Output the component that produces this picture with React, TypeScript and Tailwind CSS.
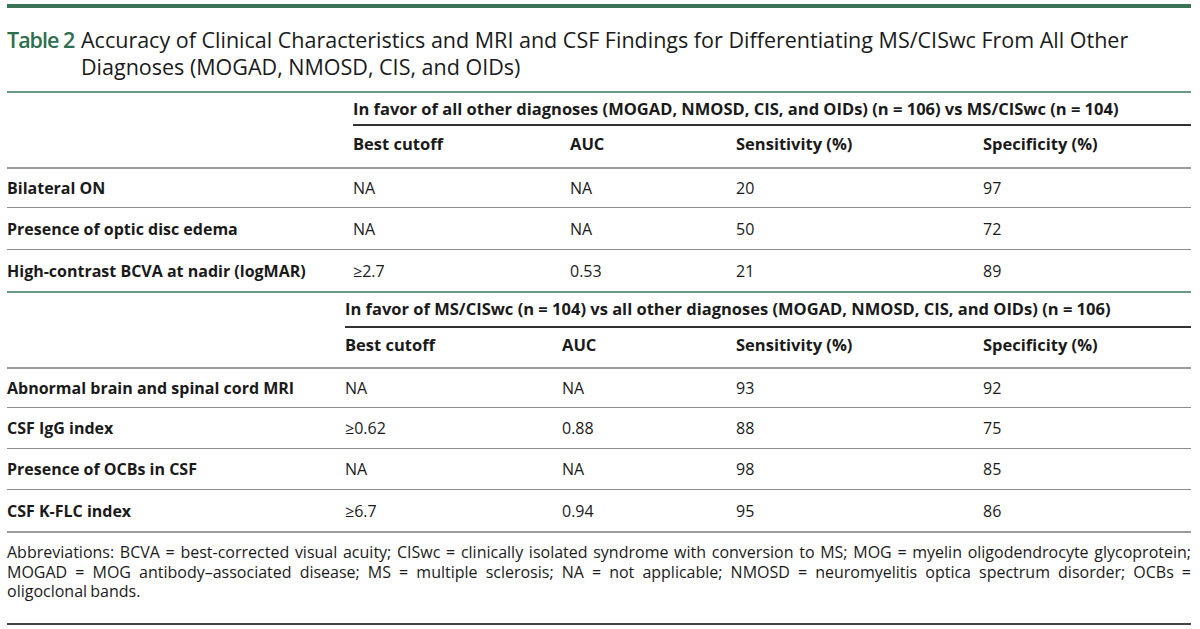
import React from 'react';

type Group = {
  title: string;
  cols: string[];
  widths: string[];
  rows: string[][];
};

const groups: Group[] = [
  {
    title: 'In favor of all other diagnoses (MOGAD, NMOSD, CIS, and OIDs) (n = 106) vs MS/CISwc (n = 104)',
    cols: ['Best cutoff', 'AUC', 'Sensitivity (%)', 'Specificity (%)'],
    widths: ['w-[346px]', 'w-[217px]', 'w-[166px]', 'w-[247px]'],
    rows: [
      ['Bilateral ON', 'NA', 'NA', '20', '97'],
      ['Presence of optic disc edema', 'NA', 'NA', '50', '72'],
      ['High-contrast BCVA at nadir (logMAR)', '≥2.7', '0.53', '21', '89'],
    ],
  },
  {
    title: 'In favor of MS/CISwc (n = 104) vs all other diagnoses (MOGAD, NMOSD, CIS, and OIDs) (n = 106)',
    cols: ['Best cutoff', 'AUC', 'Sensitivity (%)', 'Specificity (%)'],
    widths: ['w-[338px]', 'w-[217px]', 'w-[174px]', 'w-[247px]'],
    rows: [
      ['Abnormal brain and spinal cord MRI', 'NA', 'NA', '93', '92'],
      ['CSF IgG index', '≥0.62', '0.88', '88', '75'],
      ['Presence of OCBs in CSF', 'NA', 'NA', '98', '85'],
      ['CSF K-FLC index', '≥6.7', '0.94', '95', '86'],
    ],
  },
];

const Section = ({ group, first }: { group: Group; first: boolean }) => {
  const [wLabel, wCut, wAuc, wSens] = group.widths;
  return (
    <div className="flex flex-col">
      {/* group heading spanning the value columns */}
      <div className={`flex ${first ? 'h-[31px] pt-[2px]' : 'h-[33px]'} items-center`}>
        <div className={`${wLabel} shrink-0`} />
        <div className="flex-1 font-bold text-[16.5px]">{group.title}</div>
      </div>
      <div className="flex">
        <div className={`${wLabel} shrink-0`} />
        <div className="flex-1 h-[2px] bg-[#333]" />
      </div>
      <div className={`flex ${first ? 'h-[41px]' : 'h-[39px]'} items-center pb-[4px] font-bold text-[16.5px]`}>
        <div className={`${wLabel} shrink-0`} />
        <div className={`${wCut} shrink-0`}>{group.cols[0]}</div>
        <div className={`${wAuc} shrink-0`}>{group.cols[1]}</div>
        <div className={`${wSens} shrink-0`}>{group.cols[2]}</div>
        <div className="flex-1">{group.cols[3]}</div>
      </div>
      <div className="h-[2px] bg-[#9a9a9a]" />
      {group.rows.map((r, i) => {
        const last = i === group.rows.length - 1;
        return (
          <div key={r[0]}>
            <div className={`flex items-center text-[16px] ${i === 0 ? 'h-[38px]' : first ? 'h-[41px]' : last ? 'h-[41px]' : 'h-[40px]'}`}>
              <div className={`${wLabel} shrink-0 font-bold`}>{r[0]}</div>
              <div className={`${wCut} shrink-0`}>{r[1]}</div>
              <div className={`${wAuc} shrink-0`}>{r[2]}</div>
              <div className={`${wSens} shrink-0`}>{r[3]}</div>
              <div className="flex-1">{r[4]}</div>
            </div>
            {!last && <div className="h-px bg-[#8c8c8c]" />}
          </div>
        );
      })}
    </div>
  );
};

export default function App() {
  return (
    <div className="w-[1200px] h-[629px] bg-white overflow-hidden text-[#1a1a1a] font-['Open_Sans',sans-serif]">
      <div className="ml-[7px] w-[1184px] flex flex-col pt-[4px]">
        <div className="h-[4px] bg-[#3b7356]" />

        <div className="mt-[18px] mb-[11px] flex text-[21.5px] leading-[27px]">
          <span className="w-[74px] shrink-0 font-semibold tracking-[-1px] text-[#2f6e4f]">Table 2</span>
          <span className="flex-1">
            Accuracy of Clinical Characteristics and MRI and CSF Findings for Differentiating MS/CISwc From All Other
            Diagnoses (MOGAD, NMOSD, CIS, and OIDs)
          </span>
        </div>

        <div className="h-[2px] bg-[#6a9a7f]" />
        <Section group={groups[0]} first />
        <div className="h-[2px] bg-[#6a9a7f]" />
        <Section group={groups[1]} first={false} />
        <div className="h-[2px] bg-[#9a9a9a]" />

        {/* footnote: first two lines justified, as in the print layout */}
        <div className="mt-[10px] text-[16px] leading-[19.5px] [word-spacing:-1px]">
          <p className="text-justify [text-align-last:justify] whitespace-nowrap">
            Abbreviations: BCVA = best-corrected visual acuity; CISwc = clinically isolated syndrome with conversion to MS; MOG = myelin oligodendrocyte glycoprotein;
          </p>
          <p className="text-justify [text-align-last:justify] whitespace-nowrap">
            MOGAD = MOG antibody–associated disease; MS = multiple sclerosis; NA = not applicable; NMOSD = neuromyelitis optica spectrum disorder; OCBs =
          </p>
          <p>oligoclonal bands.</p>
        </div>

        <div className="mt-[21px] h-[2px] bg-[#444]" />
      </div>
    </div>
  );
}
